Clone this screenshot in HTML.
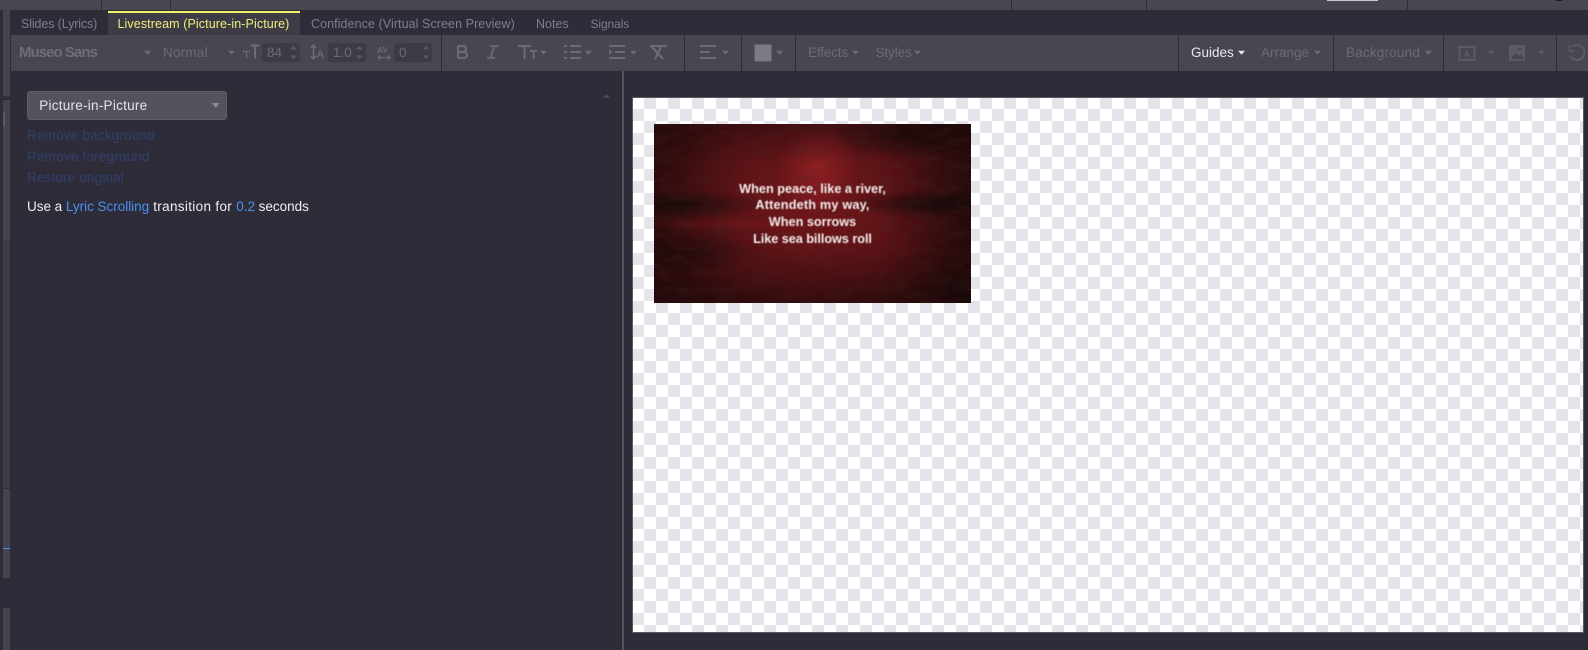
<!DOCTYPE html>
<html><head><meta charset="utf-8"><title>Livestream</title>
<style>
html,body{margin:0;padding:0;width:1588px;height:650px;overflow:hidden;background:#2e2c38}
body{font-family:"Liberation Sans",sans-serif;font-size:13px;position:relative}
.a{position:absolute}
.t{position:absolute;white-space:nowrap;line-height:16px;transform:translateY(-8px)}
.tab{color:#7f7e8c;font-size:12.5px}
.dim{color:#6c6a76;font-size:13.5px}
.link{color:#30406e;font-size:13.5px}
.sep{position:absolute;top:35px;width:1px;height:36px;background:#2e2c38}
.box{position:absolute;top:43px;height:19px;background:#3d3b46;border-radius:3px}
svg{position:absolute;left:0;top:0}
.img-text{position:absolute;left:0;width:317px;text-align:center;color:#f4eeee;font-weight:bold;font-size:12.7px;line-height:16px;filter:blur(.4px)}
</style></head><body>
<!-- top bar -->
<div class="a" style="left:0;top:0;width:1588px;height:10px;background:#484651"></div>
<div class="a" style="left:101px;top:0;width:1px;height:10px;background:#2e2c38"></div>
<div class="a" style="left:170px;top:0;width:1px;height:10px;background:#2e2c38"></div>
<div class="a" style="left:1011px;top:0;width:1px;height:10px;background:#2e2c38"></div>
<div class="a" style="left:1146px;top:0;width:1px;height:10px;background:#2e2c38"></div>
<div class="a" style="left:1407px;top:0;width:1px;height:10px;background:#2e2c38"></div>
<div class="a" style="left:1327px;top:0;width:51px;height:1px;background:#c9c8cc"></div>
<div class="a" style="left:1556px;top:0;width:6px;height:1px;background:#221a1e"></div>
<!-- left strip -->
<div class="a" style="left:0;top:10px;width:3px;height:640px;background:#2e2c38"></div>
<div class="a" style="left:3px;top:10px;width:7px;height:86px;background:#45434e"></div>
<div class="a" style="left:0;top:96px;width:10px;height:2px;background:#33313c"></div>
<div class="a" style="left:3px;top:100px;width:7px;height:140px;background:#45434e"></div>
<div class="a" style="left:3px;top:112px;width:2px;height:15px;background:#5a5864"></div>
<div class="a" style="left:3px;top:240px;width:7px;height:248px;background:#3d3b46"></div>
<div class="a" style="left:3px;top:489px;width:7px;height:89px;background:#45434e"></div>
<div class="a" style="left:3px;top:548px;width:7px;height:1px;background:#4a90f0"></div>
<div class="a" style="left:3px;top:608px;width:7px;height:42px;background:#45434e"></div>
<!-- tabs -->
<div class="a" style="left:108px;top:11px;width:192px;height:24px;background:#3d3b46"></div>
<div class="a" style="left:108px;top:11px;width:192px;height:2px;background:#f2f26a"></div>
<div class="t tab" style="left:21px;top:24px;letter-spacing:-.12px">Slides (Lyrics)</div>
<div class="t tab" style="left:117.500px;top:24px;color:#eef07a;letter-spacing:.1px">Livestream (Picture-in-Picture)</div>
<div class="t tab" style="left:311px;top:24px;letter-spacing:.075px">Confidence (Virtual Screen Preview)</div>
<div class="t tab" style="left:536px;top:24px">Notes</div>
<div class="t tab" style="left:590.500px;top:24px;font-size:12px;letter-spacing:-.1px">Signals</div>
<!-- toolbar -->
<div class="a" style="left:11px;top:35px;width:1577px;height:36px;background:#484651"></div>
<div class="t dim" style="left:19px;top:52.500px;font-weight:bold;color:#6f6d79;font-size:15px;letter-spacing:-.95px">Museo Sans</div>
<div class="t dim" style="left:163px;top:53px;letter-spacing:.2px">Normal</div>
<div class="box" style="left:262px;width:38px"></div>
<div class="box" style="left:328px;width:38px"></div>
<div class="box" style="left:394px;width:38px"></div>
<div class="t dim" style="left:267px;top:53px">84</div>
<div class="t dim" style="left:333px;top:53px">1.0</div>
<div class="t dim" style="left:399px;top:53px">0</div>
<div class="sep" style="left:441px"></div>
<div class="sep" style="left:684px"></div>
<div class="sep" style="left:741px"></div>
<div class="sep" style="left:795px"></div>
<div class="sep" style="left:1178px"></div>
<div class="sep" style="left:1333px"></div>
<div class="sep" style="left:1443px"></div>
<div class="sep" style="left:1556px"></div>
<div class="t dim" style="left:808px;top:53px;letter-spacing:-.15px">Effects</div>
<div class="t dim" style="left:875.500px;top:53px;letter-spacing:-.1px">Styles</div>
<div class="t" style="left:1191px;top:53px;color:#e8e8ee;font-size:13.5px">Guides</div>
<div class="t dim" style="left:1261px;top:53px">Arrange</div>
<div class="t dim" style="left:1346px;top:53px;letter-spacing:.2px">Background</div>
<div class="a" style="left:754px;top:44px;width:16px;height:16px;background:#7c7a86;border:1px solid #5f5d68"></div>
<!-- toolbar icons -->
<svg width="1588" height="650" fill="none">
<g fill="#6c6a76" transform="translate(0,.7)">
<path d="M144 50h7l-3.500 4zM228 50h7l-3.500 4zM540 50h7l-3.500 4zM585 50h7l-3.500 4zM630 50h7l-3.500 4zM722 50h7l-3.500 4zM776 50h7l-3.500 4zM852 50h7l-3.500 4zM914 50h7l-3.500 4zM1314 50h7l-3.500 4zM1425 50h7l-3.500 4z"/>
<path d="M1488 50h7l-3.500 4zM1538 50h7l-3.500 4z" fill="#5c5a66"/>
<path d="M1238 50h7l-3.500 4z" fill="#e8e8ee"/>
</g>
<path d="M290 49.500l3.500-3.500 3.500 3.500zM290 55.500l3.500 3.500 3.500-3.500zM356 49.500l3.500-3.500 3.500 3.500zM356 55.500l3.500 3.500 3.500-3.500zM423 49.500l3-3.500 3 3.500zM423 55.500l3 3.500 3-3.500z" fill="#5c5a66"/>
<path d="M603 98l3.500-4 3.500 4z" fill="#4b4955"/>
<g stroke="#6c6a76" stroke-width="2">
<path d="M243 51.500h7M246.500 51.500v7" stroke-width="1.300"/>
<path d="M250.500 45.500h9M255 45.500v13"/>
<path d="M313.500 46v12M311 48l2.500-3 2.500 3M311 56l2.500 3 2.500-3" stroke-width="1.500"/>
<path d="M378 57.500h12M378 57.500l2-2M378 57.500l2 2M390 57.500l-2-2M390 57.500l-2 2" stroke-width="1.300"/>
<path d="M458 46v12M458 46h5q3 0 3 3t-3 3h-5M458 52h5q4 0 4 3t-4 3h-5" stroke-width="2.200"/>
<path d="M490 46h9M487 58h8M494.500 46l-4 12" stroke-width="1.800"/>
<path d="M518 46h13M524.500 46v13M530 51h7M533.500 51v8"/>
<path d="M570 46h11M570 52h11M570 58h11M564 46h3M564 52h3M564 58h3"/>
<path d="M609 46h16M615 52h10M609 58h16"/>
<path d="M650 46h17M661 47l-6 12" stroke-width="2.200"/>
<path d="M652 47l11 12" stroke-width="2.200"/>
<path d="M700 46h16M700 52h10M700 58h16"/>
</g>
<path d="M609 49v6l3.500-3z" fill="#6c6a76"/>
<g stroke="#5c5a66" fill="none">
<path d="M1459.500 47h15v13h-15z" stroke-width="2"/>
<path d="M1572.500 46.500a7.500 7.500 0 1 1-2.500 9" stroke-width="2"/>
<path d="M1569.500 45v6h5" stroke-width="1.500"/>
</g>
<path d="M1509 45h16v16h-16z" fill="#5c5a66"/>
<path d="M1511 59l5-6 3 3 2-2 3 5z" fill="#484651"/>
<circle cx="1520" cy="49" r="1.500" fill="#484651"/>
<text x="1463.500" y="57" font-family="Liberation Sans" font-weight="bold" font-size="9" fill="#5c5a66">A</text>
<text x="316.500" y="57.500" font-family="Liberation Sans" font-weight="bold" font-size="10.500" fill="#6c6a76">A</text>
<text x="377" y="53" font-family="Liberation Sans" font-weight="bold" font-size="8" letter-spacing=".5" fill="#6c6a76">AV</text>
</svg>
<!-- divider -->
<div class="a" style="left:622px;top:71px;width:2px;height:579px;background:#55535e"></div>
<!-- left panel -->
<div class="a" style="left:27px;top:91px;width:198px;height:27px;background:#54525c;border:1px solid #5f5d68;border-radius:3px"></div>
<div class="t" style="left:39.300px;top:106px;color:#e4e4e8;font-size:13.500px;letter-spacing:.25px;z-index:2">Picture-in-Picture</div>
<svg width="1588" height="650" fill="none" style="z-index:2"><path d="M212 103h7.500l-3.750 5z" fill="#8d8c96"/></svg>
<div class="t link" style="left:27px;top:136px;letter-spacing:.2px">Remove background</div>
<div class="t link" style="left:27px;top:157px;letter-spacing:.2px">Remove foreground</div>
<div class="t link" style="left:27px;top:178px;letter-spacing:.15px">Restore original</div>
<div class="t" style="left:27px;top:207px;color:#f0f0f4;font-size:13.500px;letter-spacing:-.02px">Use a <span style="color:#4a90f0">Lyric Scrolling</span><span style="letter-spacing:.33px"> transition for </span><span style="color:#4a90f0">0.2</span> seconds</div>
<!-- canvas -->
<div class="a" style="left:632px;top:97px;width:950px;height:534px;border:1px solid #5a5864;background-color:#fff;background-image:conic-gradient(#e4e4ea 25%,#fff 0 50%,#e4e4ea 0 75%,#fff 0);background-size:24px 24px;background-position:-1px -1px"></div>
<!-- picture -->
<div class="a" style="left:654px;top:124px;width:317px;height:179px;overflow:hidden;background:
linear-gradient(90deg,rgba(20,8,8,.45),rgba(20,8,8,0) 28%,rgba(20,8,8,0) 72%,rgba(20,8,8,.6)),
linear-gradient(180deg,rgba(20,8,8,.35),rgba(20,8,8,0) 22%,rgba(20,8,8,0) 70%,rgba(20,8,8,.45)),
radial-gradient(ellipse 13% 24% at 52% 24%,rgba(150,32,36,.85),rgba(150,32,36,0)),
radial-gradient(ellipse 30% 9% at 90% 45%,rgba(14,10,8,.85),rgba(14,10,8,0)),
radial-gradient(ellipse 28% 8% at 8% 45%,rgba(18,12,10,.8),rgba(18,12,10,0)),
radial-gradient(ellipse 24% 14% at 80% 6%,rgba(18,8,8,.75),rgba(18,8,8,0)),
radial-gradient(ellipse 26% 12% at 10% 72%,rgba(24,10,10,.6),rgba(24,10,10,0)),
radial-gradient(ellipse 12% 14% at 97% 92%,rgba(18,8,8,.8),rgba(18,8,8,0)),
radial-gradient(ellipse 34% 3.500% at 22% 56%,rgba(125,22,24,.6),rgba(125,22,24,0)),
radial-gradient(ellipse 50% 2.500% at 72% 50%,rgba(110,20,22,.5),rgba(110,20,22,0)),
radial-gradient(ellipse 50% 70% at 50% 42%,#74171b,#551114 70%,#3f0d0f)">
<svg width="317" height="179" style="opacity:.3">
<filter id="n1" x="0" y="0" width="100%" height="100%"><feTurbulence type="fractalNoise" baseFrequency=".05 .13" numOctaves="4" seed="7"/><feColorMatrix values="0 0 0 0 .08  0 0 0 0 .02  0 0 0 0 .02  1.800 0 0 0 -.7"/></filter>
<rect width="317" height="179" filter="url(#n1)"/>
</svg>
<div class="img-text" style="top:56.500px">When peace, like a river,</div>
<div class="img-text" style="top:73px;letter-spacing:.18px">Attendeth my way,</div>
<div class="img-text" style="top:90px">When sorrows</div>
<div class="img-text" style="top:106.500px;letter-spacing:-.05px">Like sea billows roll</div>
</div>
</body></html>
